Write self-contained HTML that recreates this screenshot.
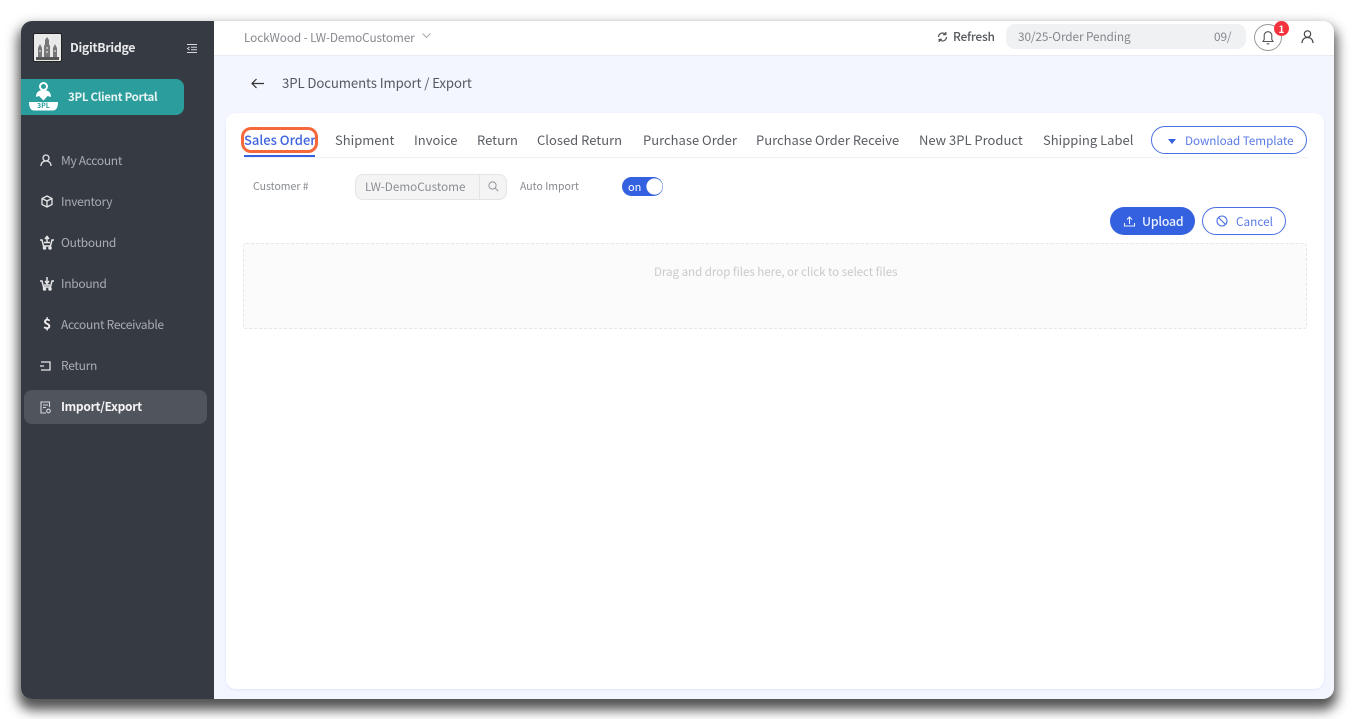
<!DOCTYPE html>
<html><head><meta charset="utf-8"><style>
*{box-sizing:border-box}
html,body{margin:0;padding:0;width:1354px;height:719px;overflow:hidden;background:#fff}
body{font-family:"Noto Sans CJK SC","Liberation Sans",sans-serif;position:relative}
.a{position:absolute;white-space:nowrap;line-height:1}
#win{position:absolute;left:21px;top:21px;width:1313px;height:678px;border-radius:11px;box-shadow:0 8px 12px 3px rgba(0,0,0,.68);background:#f3f6fe}
#side{position:absolute;left:21px;top:21px;width:193px;height:678px;background:#363a42;border-radius:11px 0 0 11px}
#head{position:absolute;left:214px;top:21px;width:1120px;height:35px;background:#fff;border-bottom:1px solid #e8ebf2;border-radius:0 11px 0 0}
#card{position:absolute;left:226px;top:113px;width:1098px;height:576px;background:#fff;border-radius:10px;box-shadow:0 1px 2px #dfe5fb}
.n{font-size:12px;color:#a9adb3;left:61px;letter-spacing:-.3px}
.t{font-size:13px;color:#5a5d63;top:133px}
svg{position:absolute;overflow:visible}
</style></head><body>
<div id="win"></div><div id="side"></div><div id="head"></div><div id="card"></div>

<!-- logo -->
<div class="a" style="left:33px;top:33px;width:29px;height:29px;background:#e9e9e9;border:1px solid #222;border-radius:2px"></div>
<svg style="left:33px;top:33px" width="29" height="29" viewBox="0 0 29 29"><path d="M5 24V15l2-4 2 4v9zM11 24V13l1-2V7l2-3 2 3v4l1 2v11zM20 24V15l2-4 2 4v9z" fill="#777"/><rect x="3" y="24" width="23" height="3" fill="#555"/><path d="M6 18h2M13 15h2M13 19h2M21 18h2" stroke="#eee"/></svg>
<div class="a" style="left:70px;top:41px;font-size:12.300px;font-weight:700;color:#e9eaec;letter-spacing:-.3px">DigitBridge</div>
<svg style="left:187px;top:44px" width="10" height="9" viewBox="0 0 10 9" fill="none" stroke="#d5d6d8"><path d="M0 .5h10M4 3.200h6M4 5.800h6M0 8.500h10M2.500 3 .5 4.500 2.500 6"/></svg>

<!-- portal -->
<div class="a" style="left:21px;top:79px;width:163px;height:36px;background:#2a9d9c;border-radius:0 8px 8px 0"></div>
<svg style="left:28px;top:81px" width="32" height="31" viewBox="0 0 32 31"><circle cx="15.500" cy="5.500" r="3.500" fill="none" stroke="#fff" stroke-width="2"/><path d="M8 16c0-5 3-7 7.500-7S23 11 23 16l-3.500-1-4 4.500L11 15z" fill="#fff"/><path d="M1 21h29c0 4-1 8.500-5 8.500H6C2 29.500 1 25 1 21z" fill="#fff"/></svg>
<div class="a" style="left:37px;top:103px;font-size:7px;font-weight:700;color:#2a9d9c">3PL</div>
<div class="a" style="left:68px;top:92px;font-size:11.500px;font-weight:700;color:#e6f3f3;letter-spacing:-.3px">3PL Client Portal</div>

<!-- nav -->
<div class="a" style="left:24px;top:390px;width:183px;height:34px;background:#50555d;border-radius:8px"></div>
<svg style="left:40px;top:154px" width="12" height="13" viewBox="0 0 12 13" fill="none" stroke="#e5e6e8" stroke-width="1.300"><circle cx="6" cy="4" r="3"/><path d="M1 12c0-3 2-5 5-5s5 2 5 5"/></svg>
<div class="a n" style="top:155px">My Account</div>
<svg style="left:41px;top:195px" width="12" height="13" viewBox="0 0 12 13" fill="none" stroke="#e5e6e8" stroke-width="1.300"><path d="M6 1l5 2.500v6L6 12 1 9.500v-6zM1 3.500 6 6l5-2.500M6 6v6"/></svg>
<div class="a n" style="top:196px">Inventory</div>
<svg style="left:40px;top:235px" width="14" height="15" viewBox="0 0 14 15" fill="none" stroke="#e5e6e8" stroke-width="1.500"><path d="M7 8V2M5 4l2-2.500L9 4M0 5h2l1.500 6h7L12 5h2M4 7.500h6"/><circle cx="4.500" cy="13" r="1" fill="#e5e6e8"/><circle cx="10" cy="13" r="1" fill="#e5e6e8"/></svg>
<div class="a n" style="top:237px">Outbound</div>
<svg style="left:40px;top:276px" width="14" height="15" viewBox="0 0 14 15" fill="none" stroke="#e5e6e8" stroke-width="1.500"><path d="M7 1v6M5 5l2 2.500L9 5M0 5h2l1.500 6h7L12 5h2M4 9h6"/><circle cx="4.500" cy="13" r="1" fill="#e5e6e8"/><circle cx="10" cy="13" r="1" fill="#e5e6e8"/></svg>
<div class="a n" style="top:278px">Inbound</div>
<div class="a" style="left:43px;top:317px;font-size:14px;font-weight:700;color:#eee">$</div>
<div class="a n" style="top:319px">Account Receivable</div>
<svg style="left:40px;top:361px" width="12" height="11" viewBox="0 0 12 11" fill="none" stroke="#e5e6e8" stroke-width="1.300"><path d="M1 1h9v8H1M0 5h4"/></svg>
<div class="a n" style="top:360px">Return</div>
<svg style="left:40px;top:401px" width="11" height="13" viewBox="0 0 11 13" fill="none" stroke="#d5d7da" stroke-width="1.100"><path d="M9.500 6V1H1v11h5M3 4h5M3 6.500h3"/><circle cx="8.500" cy="10" r="1.800"/></svg>
<div class="a n" style="top:401px;color:#f4f4f5;font-weight:700">Import/Export</div>

<!-- header -->
<div class="a" style="left:244px;top:32px;font-size:11.800px;color:#85888e;letter-spacing:-.1px">LockWood - LW-DemoCustomer</div>
<svg style="left:422px;top:33px" width="9" height="6" fill="none" stroke="#a5a8ad"><path d="M.5.500 4.500 4.500 8.500.500"/></svg>
<svg style="left:937px;top:31px" width="11" height="12" viewBox="0 0 11 12" fill="none" stroke="#555" stroke-width="1.200"><path d="M1.500 6a4 4 0 0 1 7-2.600M9.500 6a4 4 0 0 1-7 2.600M8.800 1v2.700H6M2.200 11V8.300H5"/></svg>
<div class="a" style="left:953px;top:31px;font-size:12px;font-weight:500;color:#55585e;letter-spacing:-.25px">Refresh</div>
<div class="a" style="left:1006px;top:24px;width:240px;height:25px;background:#f0f1f3;border-radius:9px"></div>
<div class="a" style="left:1018px;top:31px;font-size:11.800px;color:#84878d;letter-spacing:-.1px">30/25-Order Pending</div>
<div class="a" style="left:1214px;top:31px;font-size:11.800px;color:#84878d;letter-spacing:-.1px">09/</div>
<div class="a" style="left:1254px;top:24px;width:28px;height:27px;border:1px solid #9a9a9a;border-radius:50%;background:#fff"></div>
<svg style="left:1262px;top:30px" width="12" height="15" viewBox="0 0 12 15" fill="none" stroke="#555" stroke-width="1.100"><path d="M1 11.500h10L9.800 9.500V5.500a3.800 3.800 0 0 0-7.600 0v4zM4.700 13.800h2.600"/></svg>
<div class="a" style="left:1274px;top:21px;width:15px;height:15px;background:#f5333f;border-radius:50%;color:#fff;font-size:10px;font-weight:700;text-align:center;line-height:15px">1</div>
<svg style="left:1301px;top:30px" width="13" height="14" viewBox="0 0 13 14" fill="none" stroke="#444" stroke-width="1.200"><circle cx="6.500" cy="4" r="3.200"/><path d="M1 13c0-3 2-5.500 5.500-5.500S12 10 12 13"/></svg>

<!-- title -->
<svg style="left:251px;top:78px" width="13" height="11" viewBox="0 0 13 11" fill="none" stroke="#333" stroke-width="1.200"><path d="M13 5.500H1M5.500 1 1 5.500 5.500 10"/></svg>
<div class="a" style="left:282px;top:76px;font-size:13.200px;color:#55585e;letter-spacing:-.1px">3PL Documents Import / Export</div>

<!-- tabs -->
<div class="a t" style="left:244px;color:#3e63dd;font-weight:500">Sales Order</div>
<div class="a t" style="left:335px">Shipment</div>
<div class="a t" style="left:414px">Invoice</div>
<div class="a t" style="left:477px">Return</div>
<div class="a t" style="left:537px">Closed Return</div>
<div class="a t" style="left:643px">Purchase Order</div>
<div class="a t" style="left:756px">Purchase Order Receive</div>
<div class="a t" style="left:919px">New 3PL Product</div>
<div class="a t" style="left:1043px">Shipping Label</div>
<div class="a" style="left:244px;top:157px;width:1063px;height:1px;background:#f0f1f3"></div>
<div class="a" style="left:244px;top:155px;width:71px;height:2px;background:#3461e0"></div>
<div class="a" style="left:241px;top:127px;width:77px;height:26px;border:3px solid #f4683a;border-radius:10px"></div>
<div class="a" style="left:1151px;top:126px;width:156px;height:28px;border:1px solid #4a6fe3;border-radius:14px"></div>
<svg style="left:1168px;top:139px" width="8" height="5"><path d="M0 0h8L4 5z" fill="#3461e0"/></svg>
<div class="a" style="left:1185px;top:135px;font-size:11.700px;color:#5b7be6;letter-spacing:-.05px">Download Template</div>

<!-- form -->
<div class="a" style="left:253px;top:182px;font-size:10.500px;color:#85888e">Customer #</div>
<div class="a" style="left:355px;top:174px;width:152px;height:26px;background:#f4f4f5;border:1px solid #e3e4e6;border-radius:8px"></div>
<div class="a" style="left:479px;top:175px;width:1px;height:24px;background:#e3e4e6"></div>
<div class="a" style="left:365px;top:181px;font-size:11.700px;color:#8b8e93">LW-DemoCustome</div>
<svg style="left:488px;top:181px" width="11" height="11" fill="none" stroke="#8f9297"><circle cx="4.500" cy="4.500" r="3.600"/><path d="M7.200 7.200l3 3"/></svg>
<div class="a" style="left:520px;top:182px;font-size:10.500px;color:#85888e">Auto Import</div>
<div class="a" style="left:622px;top:177px;width:41px;height:19px;background:#3461e0;border-radius:10px"></div>
<div class="a" style="left:628px;top:182px;font-size:11px;color:#fff">on</div>
<div class="a" style="left:646px;top:178px;width:17px;height:17px;background:#fff;border-radius:50%;transform:scale(.95)"></div>

<!-- buttons -->
<div class="a" style="left:1110px;top:207px;width:85px;height:28px;background:#3461e0;border-radius:14px"></div>
<svg style="left:1124px;top:216px" width="11" height="11" fill="none" stroke="#eaf0ff" stroke-width="1.100"><path d="M5.500 8V1M3 3.500 5.500 1 8 3.500M.5 7v3h10V7"/></svg>
<div class="a" style="left:1142px;top:215px;font-size:12.300px;font-weight:500;color:#eaf0ff;letter-spacing:-.2px">Upload</div>
<div class="a" style="left:1202px;top:207px;width:84px;height:28px;border:1px solid #4a6fe3;border-radius:14px"></div>
<svg style="left:1216px;top:215px" width="12" height="12" fill="none" stroke="#4a6fe3" stroke-width="1.100"><circle cx="6" cy="6" r="5"/><path d="M2.500 2.500l7 7"/></svg>
<div class="a" style="left:1236px;top:216px;font-size:11.800px;color:#5b7be6">Cancel</div>

<!-- dropzone -->
<div class="a" style="left:243px;top:243px;width:1064px;height:86px;background:#fbfbfb;border:1px dashed #e6e6e6;border-radius:3px"></div>
<div class="a" style="left:654px;top:267px;font-size:11.600px;color:#c9cacc;letter-spacing:-.05px">Drag and drop files here, or click to select files</div>
</body></html>
